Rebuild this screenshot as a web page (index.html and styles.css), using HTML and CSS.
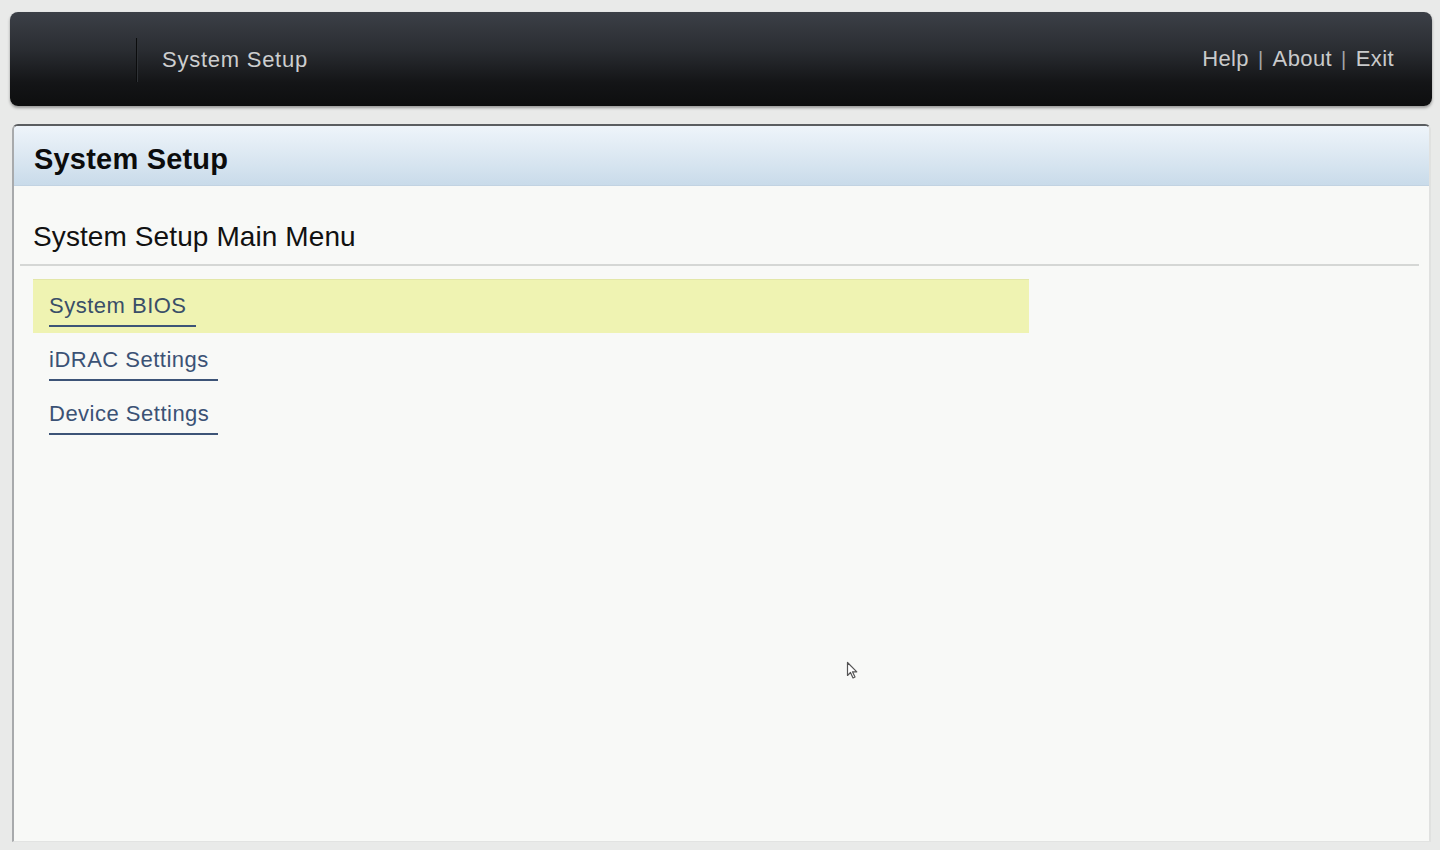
FILE: index.html
```html
<!DOCTYPE html>
<html>
<head>
<meta charset="utf-8">
<link rel="stylesheet" href="styles.css">
</head>
<body>
<div class="page">
  <header class="topbar">
    <div class="brand"></div>
    <div class="divider"></div>
    <div class="app-title">System Setup</div>
    <nav class="topnav">
      <span>Help</span><span class="sep">|</span><span>About</span><span class="sep">|</span><span>Exit</span>
    </nav>
  </header>
  <main class="panel">
    <div class="panel-head">System Setup</div>
    <div class="panel-body">
      <h2 class="menu-title">System Setup Main Menu</h2>
      <div class="rule"></div>
      <ul class="menu">
        <li class="item active"><span class="link">System BIOS</span></li>
        <li class="item"><span class="link">iDRAC Settings</span></li>
        <li class="item"><span class="link">Device Settings</span></li>
      </ul>
    </div>
  </main>
  <svg class="cursor" width="14" height="20" viewBox="0 0 14 20">
    <path d="M1.5 1.5 L1.5 14.5 L4.5 11.5 L7 17 L9 16 L6.5 10.8 L10.8 10.8 Z" fill="#fff" stroke="#555" stroke-width="1.2" stroke-linejoin="round"/>
  </svg>
</div>
</body>
</html>
```
FILE: styles.css
```css
html, body {
  margin: 0;
  padding: 0;
  background: #e9eae9;
  font-family: "Liberation Sans", Arial, sans-serif;
}
.page {
  position: relative;
  width: 1440px;
  height: 850px;
  padding: 12px 0 0 10px;
  box-sizing: border-box;
}
.topbar {
  width: 1422px;
  height: 94px;
  border-radius: 8px;
  background: linear-gradient(to bottom, #3c4047 0%, #2a2d32 40%, #141517 75%, #0d0e0f 100%);
  box-shadow: 0 2px 3px rgba(0,0,0,0.35);
  display: flex;
  align-items: center;
  box-sizing: border-box;
  padding-right: 38px;
}
.brand {
  width: 126px;
  flex: none;
}
.divider {
  width: 2px;
  height: 44px;
  background: linear-gradient(to right, #0b0c0d 50%, #2f3236 50%);
  flex: none;
  margin-top: 2px;
}
.app-title {
  margin-left: 24px;
  color: #cdcecf;
  font-size: 22px;
  letter-spacing: 0.75px;
  flex: 1;
  padding-top: 2px;
}
.topnav {
  color: #c9cacb;
  font-size: 22px;
  letter-spacing: 0.4px;
  display: flex;
  gap: 9px;
}
.topnav .sep {
  color: #a3a5a7;
  font-size: 20px;
  padding-top: 2px;
}
.panel {
  margin: 18px 0 0 2px;
  width: 1419px;
  height: 718px;
  background: #f8f9f7;
  border-top: 2px solid #5a5d60;
  border-left: 2px solid #a8aaac;
  border-right: 2px solid #e0e1e0;
  border-bottom: 1px solid #e2e3e2;
  border-radius: 6px 6px 0 0;
  box-sizing: border-box;
  overflow: hidden;
}
.panel-head {
  height: 60px;
  background: linear-gradient(to bottom, #eef4fa 0%, #dce8f2 50%, #c9dbea 100%);
  border-bottom: 1px solid #c2d3e2;
  box-sizing: border-box;
  padding: 8px 0 0 20px;
  display: flex;
  align-items: center;
  font-size: 29px;
  font-weight: bold;
  color: #0c0c0c;
  letter-spacing: 0.2px;
}
.panel-body {
  padding: 0 10px 0 6px;
}
.menu-title {
  margin: 0;
  padding: 35px 0 0 13px;
  height: 43px;
  font-size: 28px;
  font-weight: normal;
  color: #111;
  letter-spacing: 0.1px;
  line-height: 32px;
}
.rule {
  height: 2px;
  background: #d5d7d5;
}
.menu {
  list-style: none;
  margin: 13px 0 0 13px;
  padding: 0;
  width: 996px;
}
.item {
  height: 54px;
  box-sizing: border-box;
  padding: 13px 0 0 16px;
}
.item.active {
  background: #eff3b2;
  border-top: 1px solid #e3e7a8;
  padding-top: 12px;
}
.link {
  display: inline-block;
  font-size: 22px;
  color: #3b5275;
  line-height: 28px;
  padding-right: 9px;
  padding-bottom: 5px;
  border-bottom: 2px solid #3d5477;
  letter-spacing: 0.5px;
}
.item.active .link {
  color: #3a4e68;
}
.cursor {
  position: absolute;
  left: 846px;
  top: 661px;
}
```
